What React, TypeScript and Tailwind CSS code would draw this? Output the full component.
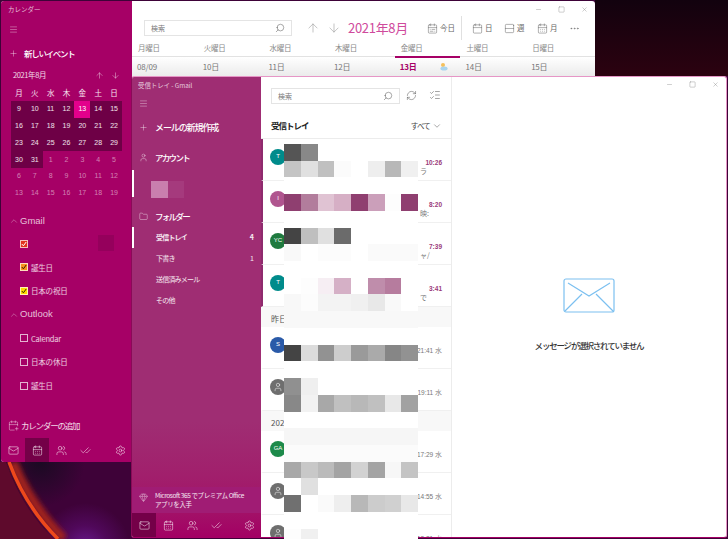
import React from "react";
import { Search, ArrowUp, ArrowDown, Menu, Plus, ChevronUp, ChevronDown, Mail, CalendarDays, Users, CheckCheck, Settings, User, Folder, RefreshCw, ListChecks, Minus, Square, X, MoreHorizontal, Gem, CalendarPlus, Calendar, CalendarRange, Columns2 } from "lucide-react";

const FONT = "font-['Noto_Sans_CJK_JP','Noto_Sans',sans-serif]";

const rows: (string[] | string)[] = [
  ["#555555","#888888","#ffffff","#ffffff","#ffffff","#ffffff","#ffffff","#ffffff"],
  ["#c4c4c4","#e0e0e0","#c0c0c0","#fbfbfb","#ffffff","#eeeeee","#b8b8b8","#f0f0f0"],
  "#ffffff",
  ["#8f3f70","#b27d9c","#e0c3d3","#d6afc5","#8f3f70","#cb9fba","#fdfdfd","#8f3f70"],
  "#ffffff",
  ["#444444","#bfbfbf","#e0e0e0","#6b6b6b","#ffffff","#ffffff","#ffffff","#ffffff"],
  ["#f9f9f9","#ffffff","#fcfcfc","#fcfcfc","#ffffff","#fafafa","#fafafa","#fafafa"],
  "#ffffff",
  ["#ffffff","#fdfdfd","#f6eef3","#d5b0c6","#ffffff","#bf8dab","#b67c9e","#ffffff"],
  ["#f8f8f8","#fcfcfc","#f3f3f3","#f3f3f3","#f0f0f0","#e8e8e8","#f9f9f9","#ffffff"],
  "#f8f8f8",
  "#ffffff",
  ["#444444","#dcdcdc","#929292","#cdcdcd","#9a9a9a","#aaaaaa","#868686","#929292"],
  "#ffffff",
  ["#909090","#efefef","#ffffff","#ffffff","#ffffff","#ffffff","#ffffff","#ffffff"],
  ["#888888","#f2f2f2","#a8a8a8","#c0c0c0","#b8b8b8","#c0c0c0","#e8e8e8","#a2a2a2"],
  "#ffffff",
  "#f6f6f6",
  "#fbfbfb",
  ["#a8a8a8","#c8c8c8","#bbbbbb","#a4a4a4","#d2d2d2","#a4a4a4","#f7f7f7","#c4c4c4"],
  ["#ffffff","#e0e0e0","#ffffff","#ffffff","#ffffff","#ffffff","#ffffff","#ffffff"],
  ["#707070","#ffffff","#fafafa","#eeeeee","#b8b8b8","#cccccc","#d0d0d0","#e8e8e8"],
  "#ffffff",
  ["#fdfdfd","#f0f0f0","#ffffff","#ffffff","#ffffff","#ffffff","#ffffff","#ffffff"],
];

function Mosaic() {
  return (
    <div className="absolute left-[284px] top-[144px] w-[134px] h-[395px] overflow-hidden z-30 bg-white">
      {rows.map((r, i) => (
        <div key={i} className="flex h-[16.72px]">
          {Array.from({ length: 8 }).map((_, j) => (
            <div key={j} className="w-[16.75px] shrink-0" style={{ background: typeof r === "string" ? r : r[j] }} />
          ))}
        </div>
      ))}
    </div>
  );
}

function Wallpaper() {
  return (
    <svg className="absolute inset-0" width="728" height="539" viewBox="0 0 728 539">
      <defs>
        <linearGradient id="top" x1="0" y1="0" x2="0" y2="1">
          <stop offset="0" stopColor="#12020e" />
          <stop offset="1" stopColor="#2c0210" />
        </linearGradient>
        <radialGradient id="pur" gradientUnits="userSpaceOnUse" cx="85" cy="548" r="45">
          <stop offset="0" stopColor="#6a1a90" />
          <stop offset="0.5" stopColor="#50085a" />
          <stop offset="1" stopColor="#50085a" stopOpacity="0" />
        </radialGradient>
        <radialGradient id="drk" gradientUnits="userSpaceOnUse" cx="40" cy="462" r="45">
          <stop offset="0" stopColor="#1a0a22" />
          <stop offset="1" stopColor="#1a0a22" stopOpacity="0" />
        </radialGradient>
        <filter id="bl"><feGaussianBlur stdDeviation="2.5" /></filter>
        <filter id="bl1"><feGaussianBlur stdDeviation="0.5" /></filter>
      </defs>
      <rect width="728" height="539" fill="#3e0238" />
      <rect y="462" width="132" height="77" fill="url(#drk)" />
      <rect y="462" width="132" height="77" fill="url(#pur)" />
      <path d="M13 462 C25 492 43 518 64 539" stroke="#a0201c" strokeWidth="9" fill="none" filter="url(#bl)" />
      <path d="M0 462 L6 462 C16 492 32 518 54 539 L0 539 Z" fill="#5e0a2c" />
      <path d="M9 462 C20 492 37 518 58 539" stroke="#ee4a1c" strokeWidth="3.5" fill="none" filter="url(#bl1)" />
      <rect x="595" width="133" height="76" fill="url(#top)" />
    </svg>
  );
}

function Ctrl({ className }: { className?: string }) {
  return (
    <div className={`flex items-center gap-[16px] text-[#777] ${className ?? ""}`}>
      <Minus size={7} strokeWidth={1.2} />
      <Square size={7} strokeWidth={1.2} />
      <X size={7} strokeWidth={1.2} />
    </div>
  );
}

function NavBar({ active }: { active: number }) {
  const icons = [Mail, CalendarDays, Users, CheckCheck];
  return (
    <div className="flex h-[24px] shrink-0 items-stretch text-white/90">
      {icons.map((I, i) => (
        <div key={i} className={`w-[24px] flex items-center justify-center ${i === active ? "bg-[#740048]" : ""}`}>
          <I size={11} strokeWidth={1.2} />
        </div>
      ))}
      <div className="flex-1" />
      <div className="w-[24px] flex items-center justify-center">
        <Settings size={11} strokeWidth={1.2} />
      </div>
    </div>
  );
}

function MiniCalendar() {
  const wk = ["月","火","水","木","金","土","日"];
  const days = [9,10,11,12,13,14,15,16,17,18,19,20,21,22,23,24,25,26,27,28,29,30,31,1,2,3,4,5,6,7,8,9,10,11,12,13,14,15,16,17,18,19];
  return (
    <div className="ml-[10px] w-[111px] mt-[3px]">
      <div className="grid grid-cols-7 h-[14px] items-center text-center text-[7.5px] text-white/90">
        {wk.map((d) => <div key={d}>{d}</div>)}
      </div>
      <div className="grid grid-cols-7 auto-rows-[16.8px] mt-[1px] text-[7px] text-center font-['Liberation_Sans',sans-serif]">
        {days.map((d, i) => {
          const inMonth = i < 23;
          const today = i === 4;
          return (
            <div key={i} className={`flex items-center justify-center ${today ? "bg-[#e3008c] text-white" : inMonth ? "bg-[#6e0046] text-white/90" : "text-white/50"}`}>
              {d}
            </div>
          );
        })}
      </div>
    </div>
  );
}

function Check({ color, on, mark = "#ffffff", label }: { color?: string; on: boolean; mark?: string; label?: string }) {
  return (
    <div className="flex items-center h-[23.6px] pl-[19px] gap-[3px] text-[7.5px] text-white/80 tracking-[-0.2px]">
      <div className="w-[8px] h-[8px] border border-white/70 flex items-center justify-center" style={on ? { background: color } : undefined}>
        {on && (
          <svg width="6" height="6" viewBox="0 0 6 6"><path d="M0.8 3 L2.4 4.8 L5.2 1" stroke={mark} strokeWidth="1" fill="none" /></svg>
        )}
      </div>
      {label && <span>{label}</span>}
    </div>
  );
}

function CalendarWindow() {
  const cols = ["月曜日","火曜日","水曜日","木曜日","金曜日","土曜日","日曜日"];
  const dates = ["08/09","10日","11日","12日","13日","14日","15日"];
  return (
    <div className="absolute left-[1px] top-[1px] w-[594px] h-[461px] rounded-[3px] overflow-hidden flex bg-white">
      <div className="w-[131px] shrink-0 bg-[#a60066] flex flex-col text-white">
        <div className="h-[18px] shrink-0 pl-[7px] flex items-center text-[6.5px] text-white/75">カレンダー</div>
        <div className="h-[20px] shrink-0 pl-[8px] flex items-center text-white/90"><Menu size={9} strokeWidth={1} /></div>
        <div className="mt-[4px] h-[20px] shrink-0 pl-[8px] flex items-center gap-[6px]"><Plus size={9} strokeWidth={1} /><span className="text-[8.5px] font-medium tracking-[-1.3px]">新しいイベント</span></div>
        <div className="mt-[4px] h-[16px] shrink-0 pl-[12px] pr-[12px] flex items-center justify-between text-[7.5px] text-white/85 tracking-[-0.4px]">
          <span>2021年8月</span>
          <span className="flex gap-[7px]"><ArrowUp size={9} strokeWidth={1.2} /><ArrowDown size={9} strokeWidth={1.2} /></span>
        </div>
        <MiniCalendar />
        <div className="mt-[10px] h-[18px] shrink-0 pl-[8px] flex items-center gap-[1px] text-[9.5px] text-white/75 font-['Liberation_Sans',sans-serif]"><ChevronUp size={10} strokeWidth={1} /><span>Gmail</span></div>
        <div className="mt-[2px] relative">
          <Check on color="#e2341d" />
          <div className="absolute left-[97px] top-[3px] w-[16px] h-[16px] bg-[#95005c]" />
        </div>
        <Check on color="#f7921e" mark="#3a1a00" label="誕生日" />
        <Check on color="#ffd800" mark="#332b00" label="日本の祝日" />
        <div className="h-[24px] shrink-0 pl-[8px] flex items-center gap-[1px] text-[9.5px] text-white/75 font-['Liberation_Sans',sans-serif]"><ChevronUp size={10} strokeWidth={1} /><span>Outlook</span></div>
        <Check on={false} label="Calendar" />
        <Check on={false} label="日本の休日" />
        <Check on={false} label="誕生日" />
        <div className="flex-1" />
        <div className="h-[20px] shrink-0 pl-[7px] mb-[3px] flex items-center gap-[2px] text-[8.5px] text-white/85 tracking-[-1.2px]"><CalendarPlus size={11} strokeWidth={1} /><span>カレンダーの追加</span></div>
        <NavBar active={1} />
      </div>
      <div className="flex-1 min-w-0 flex flex-col relative">
        <Ctrl className="absolute right-[7px] top-[5px]" />
        <div className="h-[39px] shrink-0 pt-[19px] pl-[12px] flex items-start">
          <div className="w-[148px] h-[16px] border border-[#e4e4e4] flex items-center justify-between px-[6px] text-[7px] text-[#777]">
            <span>検索</span><Search size={10} strokeWidth={1.1} className="text-[#444] -scale-x-100" />
          </div>
          <div className="flex items-center h-[16px] gap-[7px] ml-[14px] text-[#9a9a9a]"><ArrowUp size={14} strokeWidth={1} /><ArrowDown size={14} strokeWidth={1} /></div>
          <div className="h-[16px] flex items-center ml-[7px] text-[13px] text-[#cf4a9c] w-[79px] tracking-[-0.3px]">2021年8月</div>
          <div className="h-[16px] flex items-center text-[#666] text-[7.5px]">
            <span className="flex items-center gap-[2px] w-[34px]"><CalendarRange size={11} strokeWidth={1.1} />今日</span>
            <span className="w-px h-[24px] bg-[#e0e0e0]" />
            <span className="flex items-center gap-[2px] ml-[10px] w-[32px]"><Calendar size={11} strokeWidth={1.1} />日</span>
            <span className="flex items-center gap-[2px] w-[33px]"><Columns2 size={11} strokeWidth={1.1} className="rotate-90" />週</span>
            <span className="flex items-center gap-[2px] w-[32px]"><CalendarDays size={11} strokeWidth={1.1} />月</span>
            <MoreHorizontal size={11} strokeWidth={1.2} />
          </div>
        </div>
        <div className="grid grid-cols-[repeat(7,65.7px)] h-[16px] shrink-0 items-center text-[7.5px] text-[#888] tracking-[-0.2px]">
          {cols.map((c) => <div key={c} className="pl-[6px]">{c}</div>)}
        </div>
        <div className="h-[20px] shrink-0 grid grid-cols-[repeat(7,65.7px)] border-t border-[#e2e2e2] bg-gradient-to-b from-white to-[#ebebeb] text-[8px] text-[#777] tracking-[-0.2px]">
          {dates.map((d, i) => (
            <div key={d} className={`pl-[5px] flex items-center relative ${i === 4 ? "font-bold text-[#a60066]" : ""}`}>
              {i === 4 && <div className="absolute left-0 right-0 top-[-1px] h-[2px] bg-[#a60066]" />}
              {d}
              {i === 4 && (
                <svg className="absolute right-[12px] top-[5px]" width="9" height="9" viewBox="0 0 9 9">
                  <circle cx="4" cy="3" r="2" fill="#f5c05a" />
                  <ellipse cx="5" cy="6.5" rx="3.6" ry="2" fill="#a9d4ee" />
                </svg>
              )}
            </div>
          ))}
        </div>
        <div className="flex-1 bg-white" />
      </div>
    </div>
  );
}

type Item = { h: "msg"; bg: string; label: string | null; time: string; tail?: string; unread?: boolean; user?: boolean } | { h: "date"; label: string };

const items: Item[] = [
  { h: "msg", bg: "#008b8b", label: "T", time: "10:26", tail: "ラ", unread: true },
  { h: "msg", bg: "#b0558f", label: "I", time: "8:20", tail: "映:", unread: true },
  { h: "msg", bg: "#1f7a3f", label: "YC", time: "7:39", tail: "ャ/", unread: true },
  { h: "msg", bg: "#008b8b", label: "T", time: "3:41", tail: "で", unread: true },
  { h: "date", label: "昨日" },
  { h: "msg", bg: "#2a5aa8", label: "S", time: "21:41 水" },
  { h: "msg", bg: "#6e6e6e", label: null, user: true, time: "19:11 水" },
  { h: "date", label: "2021" },
  { h: "msg", bg: "#1d8a4a", label: "GA", time: "17:29 水" },
  { h: "msg", bg: "#6e6e6e", label: null, user: true, time: "14:55 水" },
  { h: "msg", bg: "#6e6e6e", label: null, user: true, time: "12:21 水" },
];

function MailList() {
  return (
    <div className="w-[191px] shrink-0 flex flex-col border-r border-[#ececec] text-[#444] overflow-hidden">
      <div className="h-[36px] shrink-0 flex items-center pl-[10px] pr-[10px]">
        <div className="mt-[2px] w-[130px] h-[16px] border border-[#e4e4e4] flex items-center justify-between px-[6px] text-[7px] text-[#777]">
          <span>検索</span><Search size={10} strokeWidth={1.1} className="text-[#444] -scale-x-100" />
        </div>
        <RefreshCw size={11} strokeWidth={1.1} className="ml-[6px] text-[#555]" />
        <ListChecks size={12} strokeWidth={1.1} className="ml-[12px] text-[#555]" />
      </div>
      <div className="h-[26px] shrink-0 flex items-center justify-between pl-[10px] pr-[9px] border-b border-[#ececec]">
        <span className="text-[8.5px] font-bold text-[#222] tracking-[-1px]">受信トレイ</span>
        <span className="flex items-center gap-[2px] text-[7.5px] tracking-[-0.8px]">すべて<ChevronDown size={10} strokeWidth={1.1} /></span>
      </div>
      {items.map((it, i) =>
        it.h === "date" ? (
          <div key={i} className="h-[20px] shrink-0 bg-[#f8f8f8] pl-[10px] pt-[3px] flex items-center text-[8px] text-[#555]">{it.label}</div>
        ) : (
          <div key={i} className={`h-[42px] shrink-0 flex items-center border-b border-[#f0f0f0] border-l-2 ${it.unread ? "border-l-[#8f2a6e]" : "border-l-transparent"} pl-[7px] relative`}>
            <div className="w-[16px] h-[16px] rounded-full text-white text-[6px] flex items-center justify-center font-['Liberation_Sans',sans-serif] mb-[6px]" style={{ background: it.bg }}>
              {it.user ? <User size={10} strokeWidth={1.2} /> : it.label}
            </div>
            <div className="flex-1" />
            <div className="pr-[9px] mt-[6px] flex flex-col items-end text-[6.5px] font-['Liberation_Sans',sans-serif]">
              <span className={it.unread ? "text-[#9a3a7a] font-bold" : "text-[#777]"}>{it.time}</span>
            </div>
            {it.tail && <span className="absolute left-[157px] top-[27px] text-[7px] text-[#777]">{it.tail}</span>}
          </div>
        )
      )}
    </div>
  );
}

function MailWindow() {
  const folders = [
    { n: "受信トレイ", c: "4", active: true },
    { n: "下書き", c: "1" },
    { n: "送信済みメール", c: "" },
    { n: "その他", c: "" },
  ];
  return (
    <div className="absolute left-[131px] top-[76px] w-[596px] h-[462px] rounded-[3px] overflow-hidden flex bg-white border border-[#e696c6] border-b-[#a60066] border-l-[#8a0a58]">
      <div className="w-[129px] shrink-0 flex flex-col text-white bg-gradient-to-b from-[#9f2d73] via-[#9f2d73] via-[75%] to-[#a30064]">
        <div className="h-[17px] shrink-0 pl-[6px] flex items-center text-[6.5px] text-white/75 tracking-[-0.1px]">受信トレイ - Gmail</div>
        <div className="h-[19px] shrink-0 pl-[7px] flex items-center text-white/90"><Menu size={9} strokeWidth={1} /></div>
        <div className="mt-[4px] h-[21px] shrink-0 pl-[7px] flex items-center gap-[7px]"><Plus size={9} strokeWidth={1} /><span className="text-[9px] font-medium tracking-[-1.1px]">メールの新規作成</span></div>
        <div className="mt-[9px] h-[20px] shrink-0 pl-[7px] flex items-center gap-[7px]"><User size={9} strokeWidth={1} /><span className="text-[8.5px] font-medium tracking-[-1.7px]">アカウント</span></div>
        <div className="mt-[3px] h-[27px] shrink-0 relative border-l-2 border-l-white">
          <div className="absolute left-[17px] top-[11px] w-[17px] h-[17px] bg-[#c97fae]" />
          <div className="absolute left-[34px] top-[11px] w-[16px] h-[17px] bg-[#a53a7d]" />
        </div>
        <div className="mt-[9px] h-[20px] shrink-0 pl-[7px] flex items-center gap-[7px]"><Folder size={9} strokeWidth={1} /><span className="text-[8.5px] font-medium tracking-[-1.7px]">フォルダー</span></div>
        <div className="mt-[1px] flex flex-col">
          {folders.map((f) => (
            <div key={f.n} className={`h-[21px] pl-[22px] pr-[8px] flex items-center justify-between text-[7px] text-white/90 tracking-[-0.8px] border-l-2 ${f.active ? "border-l-white font-bold" : "border-l-transparent"}`}>
              <span>{f.n}</span><span>{f.c}</span>
            </div>
          ))}
        </div>
        <div className="flex-1" />
        <div className="h-[26px] shrink-0 bg-[#a01c74] pl-[7px] flex items-center gap-[7px] text-[6.5px] leading-[9px] text-white/90">
          <Gem size={9} strokeWidth={1} className="shrink-0 mb-[6px]" />
          <span className="tracking-[-0.4px]">Microsoft 365 でプレミアム Office<br />アプリを入手</span>
        </div>
        <NavBar active={0} />
      </div>
      <MailList />
      <div className="flex-1 flex flex-col items-center relative">
        <Ctrl className="absolute right-[7px] top-[4px]" />
        <svg className="mt-[201px]" width="52" height="35" viewBox="0 0 52 35" fill="none" stroke="#7cc0f0" strokeWidth="1.2">
          <rect x="1" y="1" width="50" height="33" rx="2" />
          <path d="M5 5 L26 18 L47 5 M19 16 L2 33 M33 16 L50 33" />
        </svg>
        <div className="mt-[26px] text-[8.5px] font-medium text-[#333] tracking-[-1.2px]">メッセージが選択されていません</div>
      </div>
    </div>
  );
}

export default function App() {
  return (
    <div className={`relative w-[728px] h-[539px] overflow-hidden ${FONT}`}>
      <Wallpaper />
      <CalendarWindow />
      <MailWindow />
      <Mosaic />
    </div>
  );
}
